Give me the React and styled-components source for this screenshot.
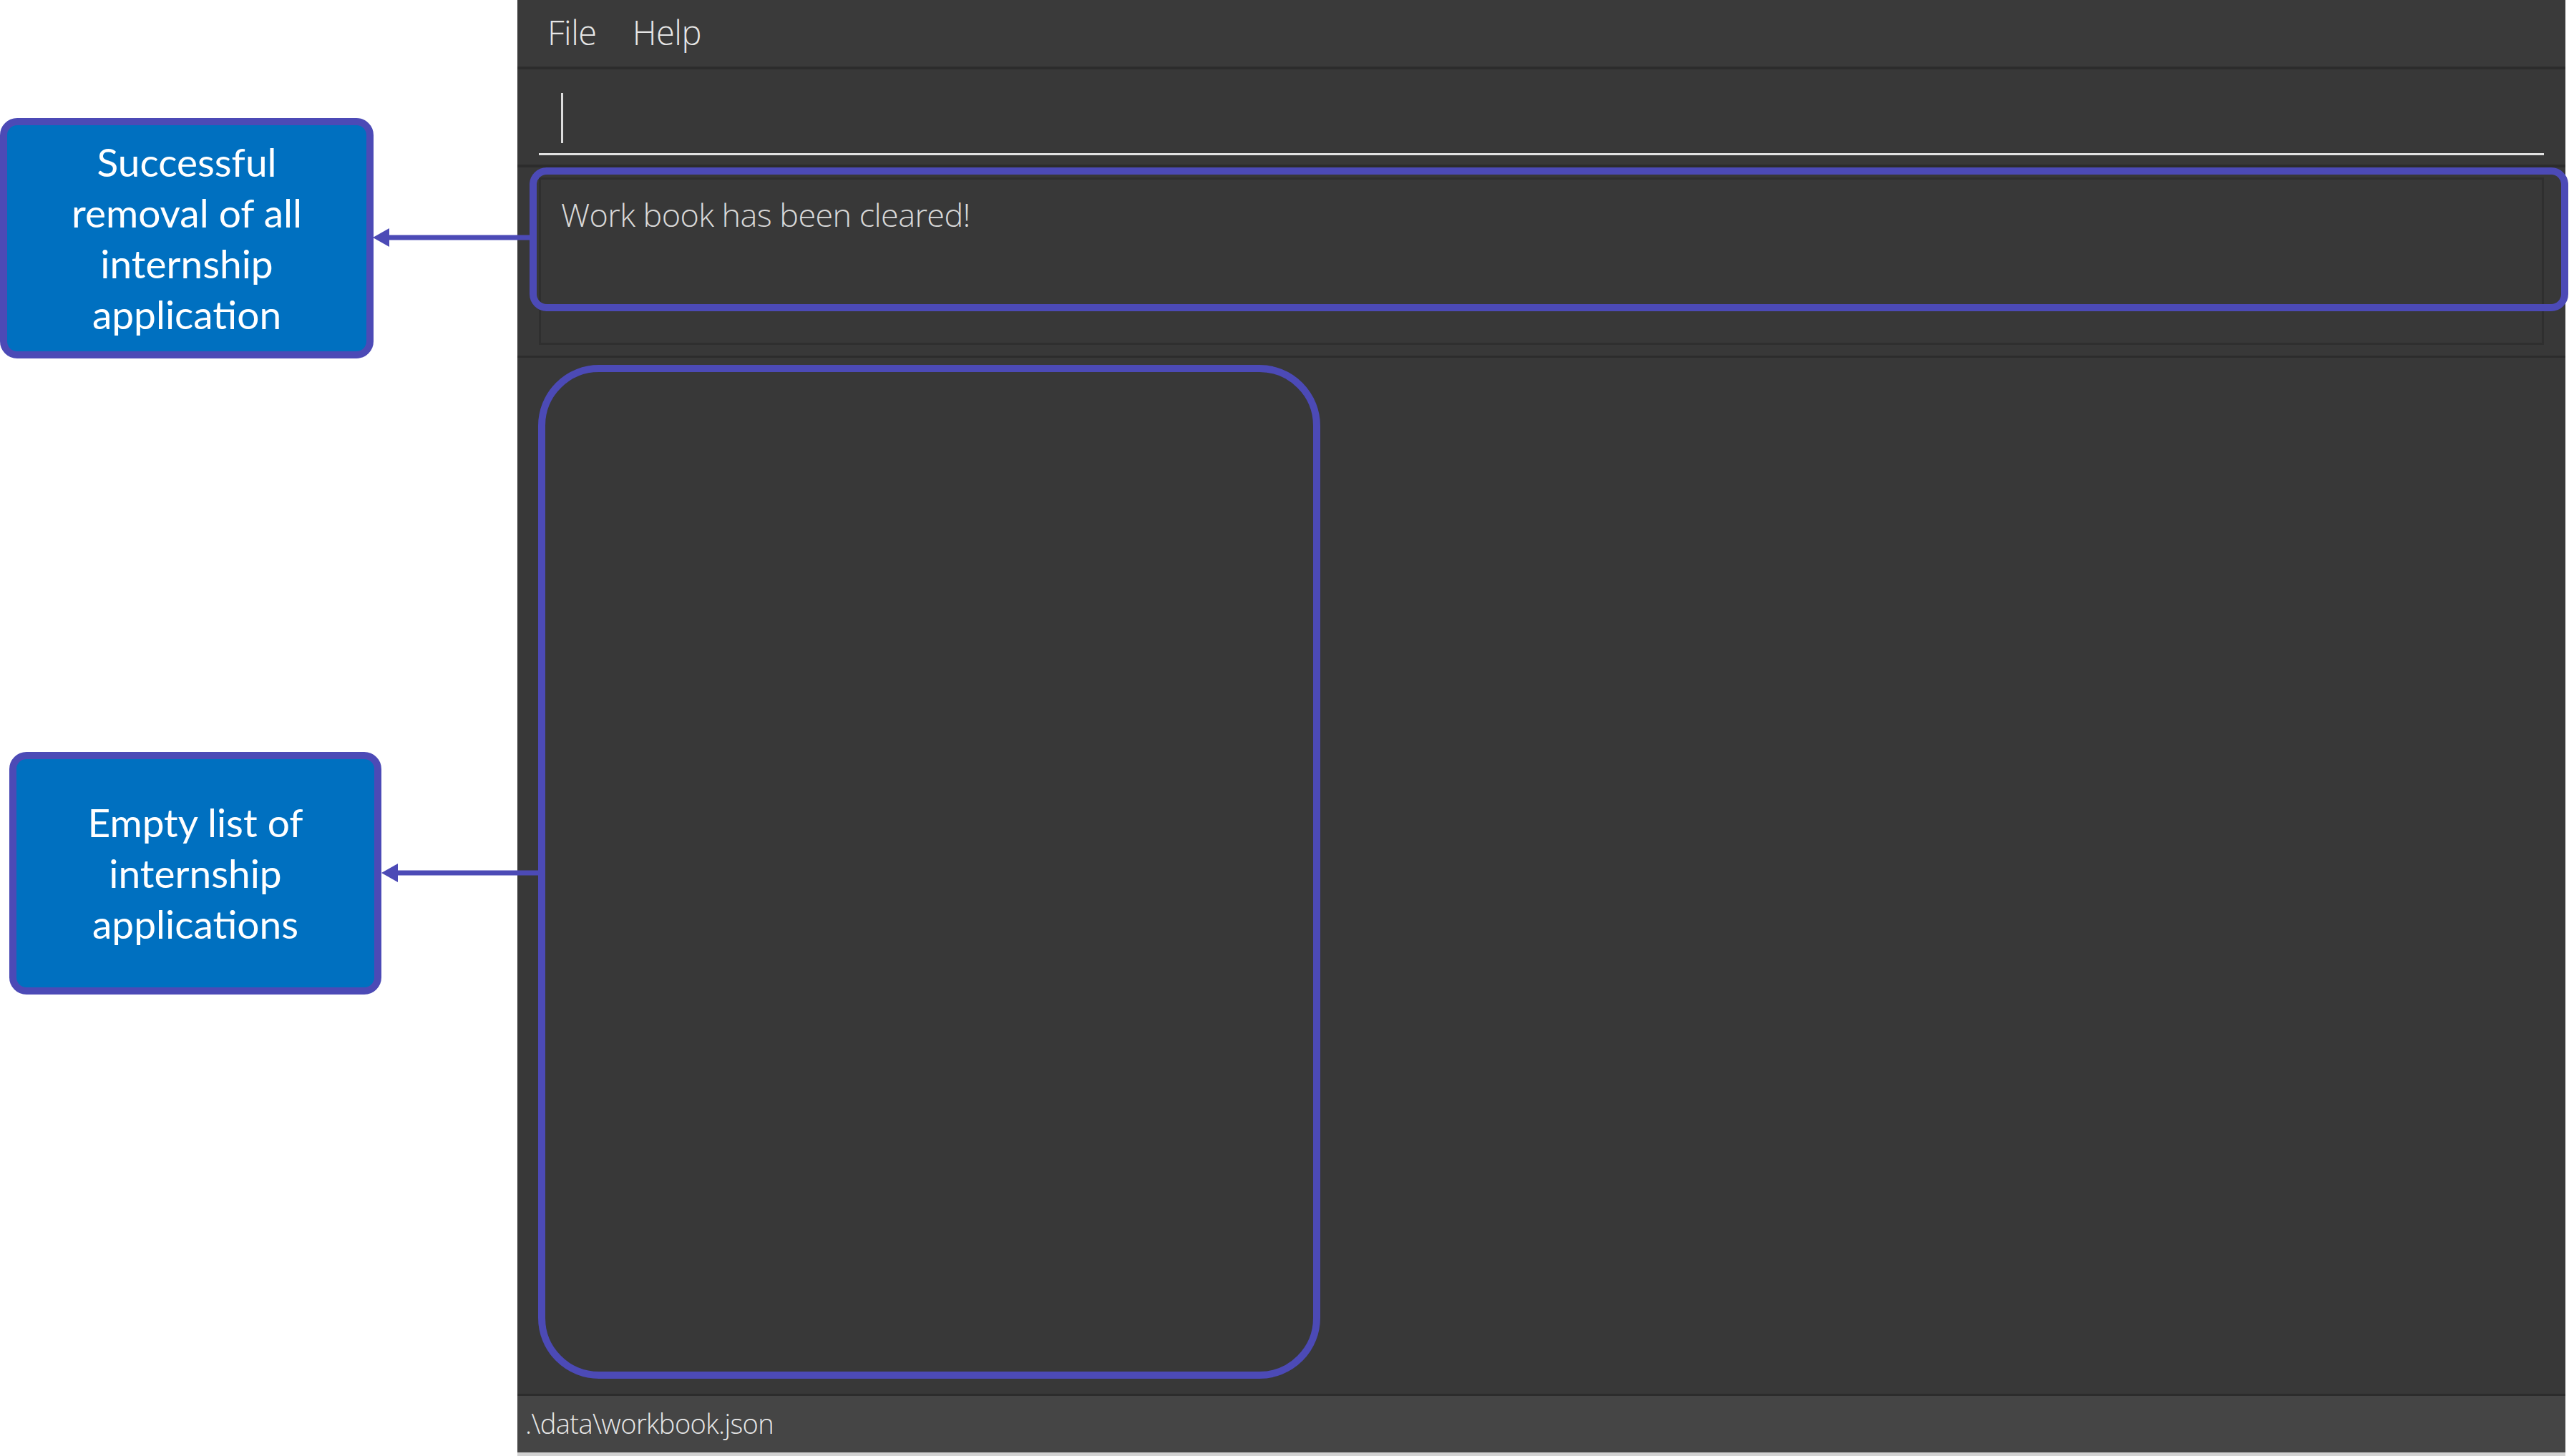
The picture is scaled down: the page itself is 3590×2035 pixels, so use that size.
import styled, { createGlobalStyle } from "styled-components";

const GlobalStyle = createGlobalStyle`
  html, body {
    margin: 0;
    padding: 0;
    background: #ffffff;
  }
`;

const PURPLE = "#4c4ab6";

const Page = styled.div`
  position: relative;
  display: flex;
  width: 3590px;
  height: 2035px;
  overflow: hidden;
  background: #ffffff;
`;

const Annotations = styled.aside`
  display: flex;
  flex-direction: column;
  width: 723px;
  flex-shrink: 0;
`;

const Callout = styled.div`
  box-sizing: border-box;
  display: flex;
  flex-direction: column;
  justify-content: center;
  align-items: center;
  margin-top: ${(p) => p.$top}px;
  margin-left: ${(p) => p.$left || 0}px;
  width: ${(p) => p.$width}px;
  height: ${(p) => p.$height}px;
  background: #0070c0;
  border: 10px solid ${PURPLE};
  border-radius: 24px;
  color: #ffffff;
  font-family: Lato, "Open Sans", sans-serif;
  font-size: 55px;
  line-height: 71px;
  text-align: center;
  white-space: nowrap;
`;

const Window = styled.main`
  display: flex;
  flex-direction: column;
  width: 2862px;
  height: 2035px;
  background: #383838;
  font-family: "Open Sans", "Noto Sans", sans-serif;
  font-weight: 300;
`;

const MenuBar = styled.nav`
  display: flex;
  align-items: center;
  gap: 50px;
  height: 93px;
  padding: 0 0 4px 42px;
  box-sizing: border-box;
  background: #3a3a3a;
`;

const MenuItem = styled.span`
  color: #e6e6e6;
  font-size: 47px;
  letter-spacing: -0.5px;
`;

const Divider = styled.div`
  height: ${(p) => p.$h || 4}px;
  background: #2c2c2c;
  flex-shrink: 0;
`;

const CommandPane = styled.section`
  height: 133px;
  padding: 0 30px;
  box-sizing: border-box;
  display: flex;
  flex-direction: column;
`;

const CommandInput = styled.div`
  margin-top: 33px;
  height: 87px;
  box-sizing: border-box;
  border-bottom: 3px solid #e2e2e2;
  padding-left: 31px;
`;

const Caret = styled.div`
  width: 3px;
  height: 70px;
  background: #dcdcdc;
`;

const ResultPane = styled.section`
  height: 263px;
  padding: 14px 30px 15px 30px;
  box-sizing: border-box;
`;

const ResultBox = styled.div`
  height: 100%;
  box-sizing: border-box;
  border: 3px solid #2f2f2f;
  padding: 19px 28px;
  color: #d9d9d9;
  font-size: 45px;
  letter-spacing: -0.6px;
  line-height: 60px;
`;

const ListPane = styled.section`
  flex: 1;
  padding: 10px 29px 21px 29px;
  box-sizing: border-box;
  display: flex;
`;

const ListView = styled.div`
  width: 1093px;
  height: 100%;
  box-sizing: border-box;
  border: 10px solid ${(p) => (p.$highlight ? PURPLE : "transparent")};
  border-radius: 85px;
`;

const StatusBar = styled.footer`
  height: 79px;
  background: #454545;
  display: flex;
  align-items: center;
  padding: 0 0 4px 11px;
  box-sizing: border-box;
  color: #e8e8e8;
  font-size: 38px;
  letter-spacing: -0.6px;
`;

const BottomEdge = styled.div`
  height: 5px;
  background: #d2d2d2;
`;

const Highlight = styled.div`
  position: absolute;
  left: ${(p) => p.$x}px;
  top: ${(p) => p.$y}px;
  width: ${(p) => p.$w}px;
  height: ${(p) => p.$h}px;
  box-sizing: border-box;
  border: 10px solid ${PURPLE};
  border-radius: 24px;
  pointer-events: none;
`;

const ArrowSvg = styled.svg`
  position: absolute;
  left: ${(p) => p.$x}px;
  top: ${(p) => p.$y - 14}px;
  overflow: visible;
`;

function Arrow({ x1, x2, y }) {
  const len = x2 - x1;
  return (
    <ArrowSvg $x={x1} $y={y} width={len} height={28}>
      <line x1={20} y1={14} x2={len} y2={14} stroke={PURPLE} strokeWidth={7} />
      <polygon points={`0,14 23,1 23,27`} fill={PURPLE} />
    </ArrowSvg>
  );
}

export default function App() {
  return (
    <>
      <GlobalStyle />
      <Page>
        <Annotations>
          <Callout $top={165} $width={522} $height={336}>
            <span>Successful</span>
            <span>removal of all</span>
            <span>internship</span>
            <span>application</span>
          </Callout>
          <Callout $top={550} $left={13} $width={520} $height={339}>
            <span>Empty list of</span>
            <span>internship</span>
            <span>applications</span>
          </Callout>
        </Annotations>

        <Window>
          <MenuBar>
            <MenuItem>File</MenuItem>
            <MenuItem>Help</MenuItem>
          </MenuBar>
          <Divider $h={4} />
          <CommandPane>
            <CommandInput>
              <Caret />
            </CommandInput>
          </CommandPane>
          <Divider $h={4} />
          <ResultPane>
            <ResultBox>Work book has been cleared!</ResultBox>
          </ResultPane>
          <Divider $h={3} />
          <ListPane>
            <ListView $highlight />
          </ListPane>
          <Divider $h={3} />
          <StatusBar>.\data\workbook.json</StatusBar>
          <BottomEdge />
        </Window>

        <Highlight $x={740} $y={234} $w={2849} $h={201} />
        <Arrow x1={521} x2={740} y={332} />
        <Arrow x1={533} x2={752} y={1220} />
      </Page>
    </>
  );
}
